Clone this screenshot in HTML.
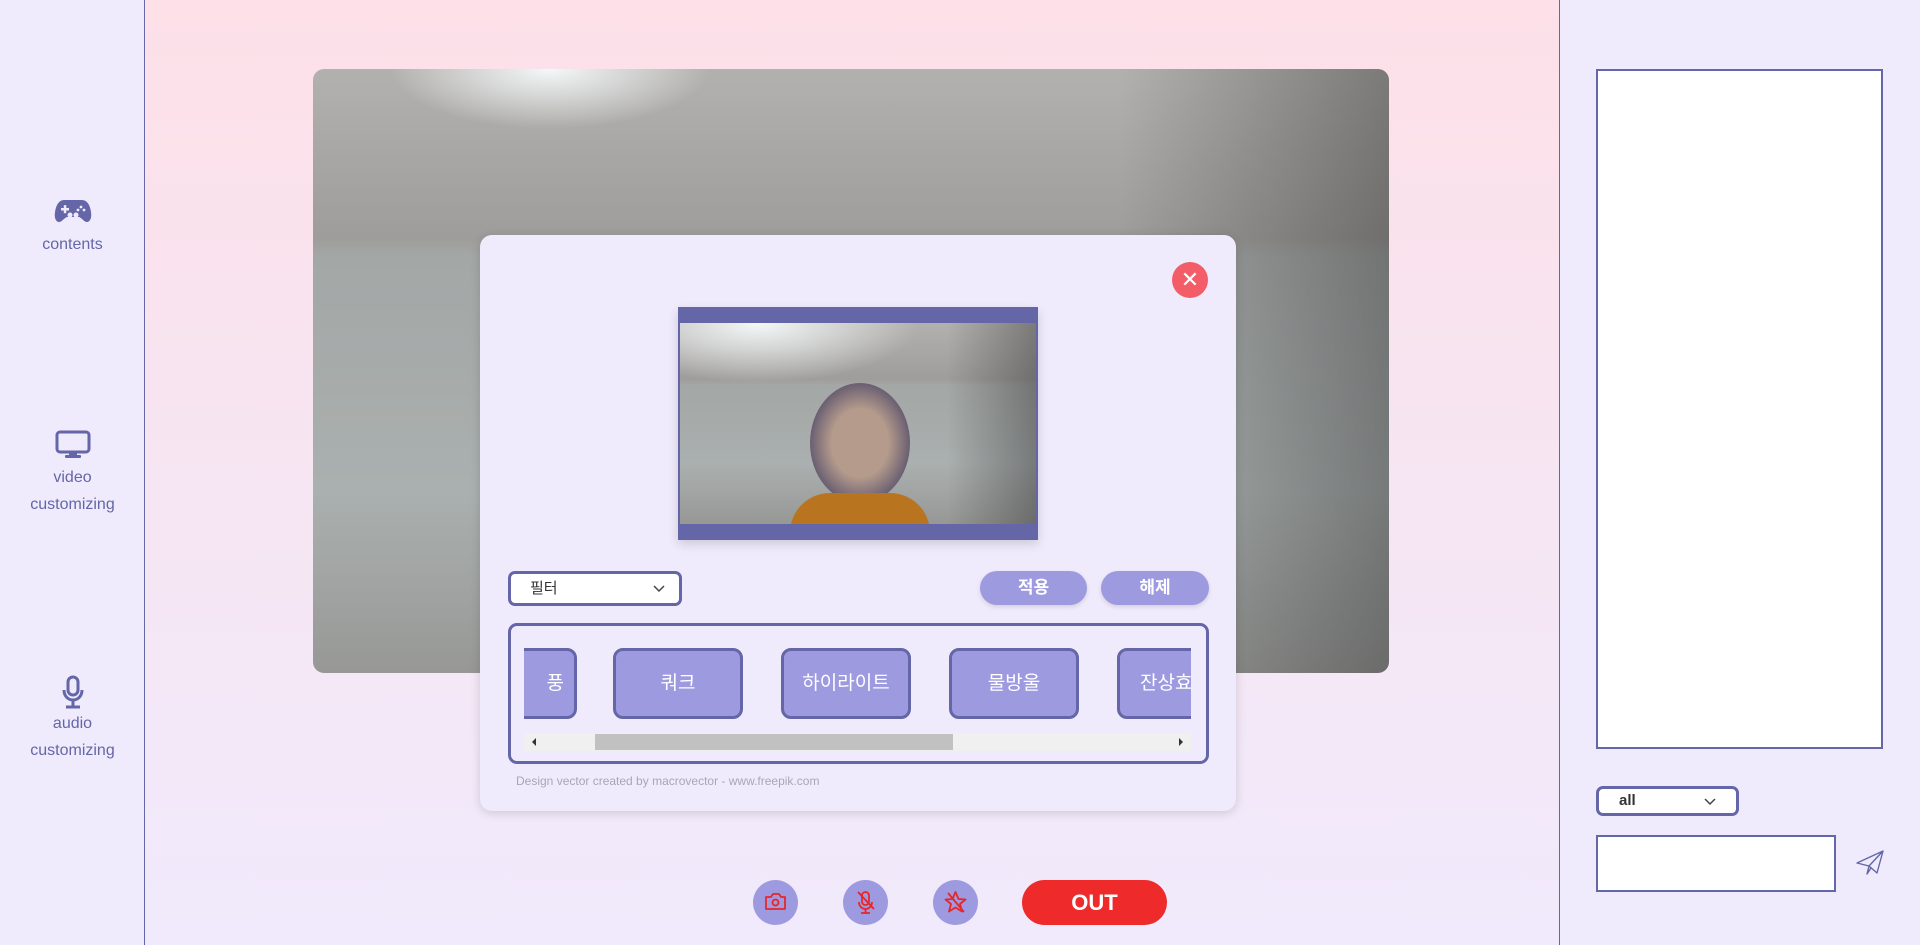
<!DOCTYPE html>
<html><head><meta charset="utf-8"><style>
*{margin:0;padding:0;box-sizing:border-box}
body{width:1920px;height:945px;overflow:hidden;font-family:"Liberation Sans","Noto Sans CJK KR",sans-serif;background:#efebfc;position:relative}
.side{position:absolute;left:0;top:0;width:145px;height:945px;background:#efebfc;border-right:1px solid #6466a8}
.side .it{position:absolute;left:0;width:145px;text-align:center;color:#6466a8;font-size:16px;line-height:27px}
.main{position:absolute;left:146px;top:0;width:1413px;height:945px;background:linear-gradient(#fde0e8,#f0eafc)}
.right{position:absolute;left:1559px;top:0;width:361px;height:945px;background:#efebfc;border-left:1px solid #6466a8}
.cam{position:absolute;overflow:hidden;background:
radial-gradient(ellipse 160px 60px at 22% 0%,#f4f8f8,rgba(240,240,240,0) 100%),
linear-gradient(90deg,rgba(0,0,0,0) 75%,rgba(40,40,40,.4) 100%),
linear-gradient(#b3b1af 0%,#9f9d9b 28%,#a3a7a6 31%,#aab0af 70%,#979896 100%)}
.modal{position:absolute;left:480px;top:235px;width:756px;height:576px;background:#efebfc;border-radius:12px;box-shadow:0 2px 10px rgba(0,0,0,.15)}
.sel{position:absolute;background:#fff;border:3px solid #6466a8;border-radius:7px;font-size:15px;color:#333}
.pill{position:absolute;background:#9e9ae0;color:#fff;font-weight:bold;font-size:17px;border-radius:18px;text-align:center;line-height:34px;box-shadow:0 2px 5px rgba(0,0,0,.12)}
.fb{position:absolute;top:648px;width:130px;height:71px;background:#9e9ae0;border:3px solid #6466a8;border-radius:10px;color:#fff;font-size:19px;text-align:center;line-height:65px}
.circ{position:absolute;top:880px;width:45px;height:45px;border-radius:50%;background:#9e9ae0}
</style></head><body>
<div class="side">
 <div class="it" style="top:198px"><svg width="38" height="26" viewBox="0 0 38 26"><path d="M10 2h18c5 0 8 5 9 12 1 6-1 10-4 10-3 0-5-4-8-5H13c-3 1-5 5-8 5-3 0-5-4-4-10C2 7 5 2 10 2z" fill="#6466a8"/><rect x="7" y="10" width="8" height="2.5" fill="#efebfc"/><rect x="9.8" y="7.2" width="2.5" height="8" fill="#efebfc"/><circle cx="27" cy="9" r="1.4" fill="#efebfc"/><circle cx="30" cy="12" r="1.4" fill="#efebfc"/><circle cx="24" cy="12" r="1.4" fill="#efebfc"/><circle cx="16" cy="17" r="2.5" fill="#efebfc"/><circle cx="22" cy="17" r="2.5" fill="#efebfc"/></svg></div>
 <div class="it" style="top:231px">contents</div>
 <div class="it" style="top:430px"><svg width="36" height="30" viewBox="0 0 36 30"><rect x="2" y="2" width="32" height="20" rx="3" fill="none" stroke="#6466a8" stroke-width="3"/><rect x="14" y="22" width="8" height="4" fill="#6466a8"/><rect x="10" y="25" width="16" height="3" rx="1" fill="#6466a8"/></svg></div>
 <div class="it" style="top:464px">video<br>customizing</div>
 <div class="it" style="top:675px"><svg width="24" height="34" viewBox="0 0 24 34"><rect x="7" y="2" width="10" height="18" rx="5" fill="none" stroke="#6466a8" stroke-width="3"/><path d="M3 15c0 6 4 10 9 10s9-4 9-10M12 25v6M5 32h14" fill="none" stroke="#6466a8" stroke-width="3"/></svg></div>
 <div class="it" style="top:710px">audio<br>customizing</div>
</div>
<div class="main"></div>
<div class="cam" style="left:313px;top:69px;width:1076px;height:604px;border-radius:11px"></div>
<div class="modal">
 <div style="position:absolute;left:692px;top:27px;width:36px;height:36px;border-radius:50%;background:#f25d68;color:#fff;text-align:center;line-height:36px;font-size:22px">✕</div>
</div>
<div style="position:absolute;left:678px;top:307px;width:360px;height:233px;background:#6466a8;box-shadow:0 4px 10px rgba(0,0,0,.15)"></div>
<div class="cam" style="left:680px;top:323px;width:356px;height:201px"><div style="position:absolute;left:130px;top:60px;width:100px;height:120px;border-radius:50%;background:radial-gradient(#b59b8c 40%,#6b6072 70%,rgba(100,100,110,0) 100%)"></div><div style="position:absolute;left:110px;top:170px;width:140px;height:40px;border-radius:40px 40px 0 0;background:#b8741e"></div></div>
<div class="sel" style="left:508px;top:571px;width:174px;height:35px;padding:0 0 0 19px;line-height:29px">필터<svg style="position:absolute;right:14px;top:11px" width="12" height="8"><path d="M1 1l5 5 5-5" fill="none" stroke="#444" stroke-width="1.5"/></svg></div>
<div class="pill" style="left:980px;top:571px;width:107px">적용</div>
<div class="pill" style="left:1101px;top:571px;width:108px">해제</div>
<div style="position:absolute;left:508px;top:623px;width:701px;height:141px;border:3px solid #6466a8;border-radius:9px;background:#efebfc"></div>
<div style="position:absolute;left:524px;top:640px;width:667px;height:90px;overflow:hidden">
 <div class="fb" style="left:-77px;top:8px;text-align:right;padding-right:10px">풍</div>
 <div class="fb" style="left:89px;top:8px">쿼크</div>
 <div class="fb" style="left:257px;top:8px">하이라이트</div>
 <div class="fb" style="left:425px;top:8px">물방울</div>
 <div class="fb" style="left:593px;top:8px;text-align:left;padding-left:20px;white-space:nowrap">잔상효과</div>
</div>
<div style="position:absolute;left:524px;top:733px;width:667px;height:18px;background:#f0f0f0"><div style="position:absolute;left:71px;top:1px;width:358px;height:16px;background:#c1c1c1"></div><div style="position:absolute;left:8px;top:5px;border:4px solid transparent;border-right:4px solid #333;border-left:0"></div><div style="position:absolute;right:8px;top:5px;border:4px solid transparent;border-left:4px solid #333;border-right:0"></div></div>
<div style="position:absolute;left:516px;top:774px;font-size:12px;color:#a8a6b4">Design vector created by macrovector - www.freepik.com</div>
<div class="circ" style="left:753px"><svg width="45" height="45" viewBox="0 0 45 45"><path d="M13 17h5l2-3h6l2 3h4v12H13z" fill="none" stroke="#e8262a" stroke-width="1.8" stroke-linejoin="round"/><circle cx="22.5" cy="22.5" r="3" fill="none" stroke="#e8262a" stroke-width="1.8"/></svg></div>
<div class="circ" style="left:843px"><svg width="45" height="45" viewBox="0 0 45 45"><rect x="19" y="12" width="7" height="13" rx="3.5" fill="none" stroke="#e8262a" stroke-width="1.8"/><path d="M16 22c0 4 3 7 6.5 7s6.5-3 6.5-7M22.5 29v4M18 33h9M15 12l16 17" fill="none" stroke="#e8262a" stroke-width="1.8"/></svg></div>
<div class="circ" style="left:933px"><svg width="45" height="45" viewBox="0 0 45 45"><path d="M22.5 12l3 7 7 .5-5.5 4.5 2 7.5-6.5-4-6.5 4 2-7.5-5.5-4.5 7-.5z" fill="none" stroke="#e8262a" stroke-width="1.8" stroke-linejoin="round"/><path d="M15 13l16 19" stroke="#e8262a" stroke-width="1.8"/></svg></div>
<div style="position:absolute;left:1022px;top:880px;width:145px;height:45px;border-radius:23px;background:#ee2a2a;color:#fff;font-weight:bold;font-size:22px;text-align:center;line-height:45px">OUT</div>
<div class="right"></div>
<div style="position:absolute;left:1596px;top:69px;width:287px;height:680px;background:#fff;border:2px solid #6466a8"></div>
<div class="sel" style="left:1596px;top:786px;width:143px;height:30px;padding-left:20px;line-height:24px;font-weight:bold;font-size:15px">all<svg style="position:absolute;right:20px;top:9px" width="12" height="8"><path d="M1 1l5 5 5-5" fill="none" stroke="#444" stroke-width="1.5"/></svg></div>
<div style="position:absolute;left:1596px;top:835px;width:240px;height:57px;background:#fff;border:2px solid #6466a8"></div>
<svg style="position:absolute;left:1855px;top:848px" width="30" height="30" viewBox="0 0 30 30"><path d="M2 15L28 3 22 25 14 18zM14 18l-2 8 4-6M14 18L28 3" fill="none" stroke="#6466a8" stroke-width="1.4" stroke-linejoin="round"/></svg>
</body></html>
